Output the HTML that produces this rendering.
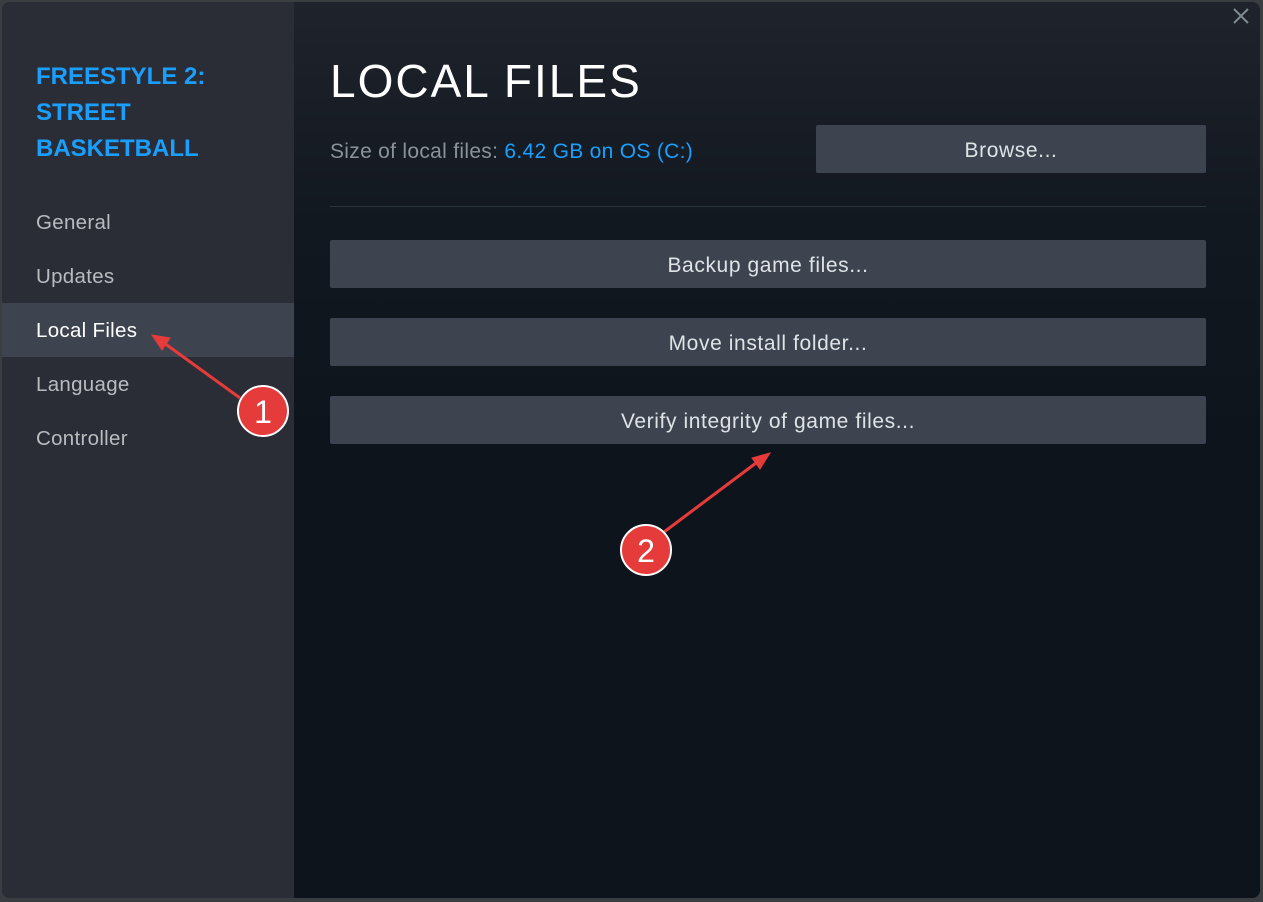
<!DOCTYPE html>
<html><head><style>
body{margin:0;width:1263px;height:902px;background:#3a3d42;overflow:hidden;font-family:"Liberation Sans",sans-serif;position:relative}
.win{position:absolute;left:2px;top:2px;width:1258px;height:896px;border-radius:8px;overflow:hidden;background:#0e141b}
.side{position:absolute;left:0;top:0;width:292px;height:100%;background:#2a2d35}
.main{position:absolute;left:292px;top:0;right:0;height:100%;background:linear-gradient(180deg,#1f232b 0%,#121820 25%,#0e141b 50%)}
.title{position:absolute;left:34px;top:57px;color:#1a9fff;font-weight:bold;font-size:24px;line-height:36px;letter-spacing:0}
.nav{position:absolute;left:0;width:292px;height:54px;line-height:56px;padding-left:34px;box-sizing:border-box;color:#b8bcbf;font-size:20.5px;letter-spacing:.3px}
.nav.a{background:#3d4450;color:#fff}
h1{position:absolute;left:328px;top:52px;margin:0;color:#fff;font-weight:normal;font-size:46px;letter-spacing:2px}
.sz{position:absolute;left:328px;top:138px;color:#8b929a;font-size:21px;letter-spacing:.3px}
.sz span{color:#1a9fff}
.btn{position:absolute;background:#3d4450;color:#dfe3e6;font-size:21px;letter-spacing:.6px;text-align:center;border-radius:2px}
.hr{position:absolute;left:328px;top:204px;width:876px;height:1px;background:#2c323a}
</style></head><body>
<div class="win">
<div class="side">
<div class="title">FREESTYLE 2:<br>STREET<br>BASKETBALL</div>
<div class="nav" style="top:193px">General</div>
<div class="nav" style="top:247px">Updates</div>
<div class="nav a" style="top:301px">Local Files</div>
<div class="nav" style="top:355px">Language</div>
<div class="nav" style="top:409px">Controller</div>
</div>
<div class="main"></div>
<h1>LOCAL FILES</h1>
<div class="sz">Size of local files: <span>6.42 GB on OS (C:)</span></div>
<div class="btn" style="left:814px;top:123px;width:390px;height:48px;line-height:52px">Browse...</div>
<div class="hr"></div>
<div class="btn" style="left:328px;top:238px;width:876px;height:48px;line-height:52px">Backup game files...</div>
<div class="btn" style="left:328px;top:316px;width:876px;height:48px;line-height:52px">Move install folder...</div>
<div class="btn" style="left:328px;top:394px;width:876px;height:48px;line-height:52px">Verify integrity of game files...</div>
</div>
<svg style="position:absolute;left:0;top:0" width="1263" height="902">
<path d="M1234 9L1248 23M1248 9L1234 23" stroke="#7d8a90" stroke-width="2"/>
<g stroke="#e63b3b" stroke-width="3" fill="#e63b3b">
<line x1="240" y1="398" x2="160" y2="340"/><path d="M152 335L170 338L162 350Z" stroke-width="1"/>
<line x1="660" y1="535" x2="760" y2="460"/><path d="M770 453L752 458L760 469Z" stroke-width="1"/>
</g>
<circle cx="263" cy="411" r="25" fill="#e63b3b" stroke="#fff" stroke-width="2"/>
<text x="263" y="423" fill="#fff" font-size="32" text-anchor="middle" font-family="Liberation Sans">1</text>
<circle cx="646" cy="550" r="25" fill="#e63b3b" stroke="#fff" stroke-width="2"/>
<text x="646" y="562" fill="#fff" font-size="32" text-anchor="middle" font-family="Liberation Sans">2</text>
</svg>
</body></html>
